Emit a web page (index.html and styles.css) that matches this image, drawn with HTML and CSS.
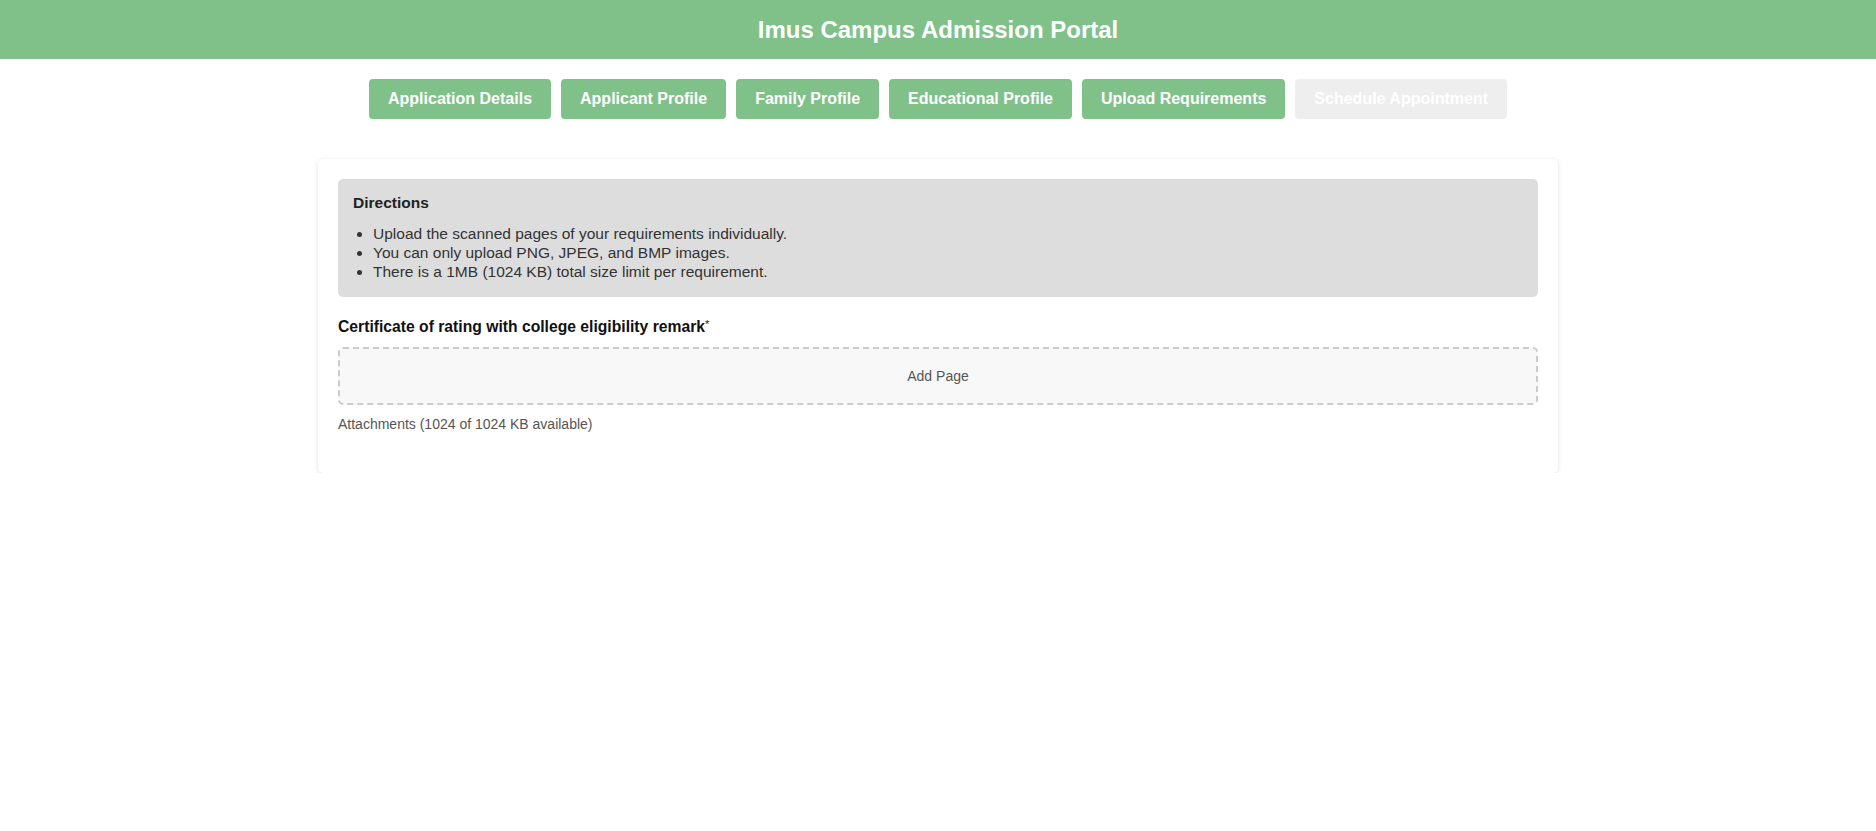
FILE: index.html
```html
<!DOCTYPE html>
<html lang="en">
<head>
<meta charset="utf-8">
<title>Imus Campus Admission Portal</title>
<link rel="stylesheet" href="styles.css">
</head>
<body>
<header class="topbar">
  <h1 class="topbar-title">Imus Campus Admission Portal</h1>
</header>
<nav class="steps">
  <a class="step">Application Details</a>
  <a class="step">Applicant Profile</a>
  <a class="step">Family Profile</a>
  <a class="step">Educational Profile</a>
  <a class="step">Upload Requirements</a>
  <a class="step step-disabled">Schedule Appointment</a>
</nav>
<main class="card">
  <section class="directions">
    <h2 class="directions-title">Directions</h2>
    <ul class="directions-list">
      <li>Upload the scanned pages of your requirements individually.</li>
      <li>You can only upload PNG, JPEG, and BMP images.</li>
      <li>There is a 1MB (1024 KB) total size limit per requirement.</li>
    </ul>
  </section>
  <section class="requirement">
    <div class="req-label">Certificate of rating with college eligibility remark<span class="req-star">*</span></div>
    <div class="dropzone">Add Page</div>
    <div class="req-note">Attachments (1024 of 1024 KB available)</div>
  </section>
</main>
</body>
</html>
```
FILE: styles.css
```css
* { box-sizing: border-box; }
html, body { margin: 0; padding: 0; }
body {
  font-family: "Liberation Sans", Arial, sans-serif;
  background: #ffffff;
  color: #222;
}
.topbar {
  height: 59px;
  background: #80c18a;
  display: flex;
  align-items: center;
  justify-content: center;
}
.topbar-title {
  margin: 0;
  font-size: 24px;
  font-weight: bold;
  color: #ffffff;
  line-height: 27px;
  padding-bottom: 1px;
}
.steps {
  display: flex;
  justify-content: center;
  gap: 10px;
  margin-top: 20px;
}
.step {
  display: flex;
  align-items: center;
  height: 40px;
  padding: 0 19px;
  background: #80c18a;
  color: #ffffff;
  font-size: 16px;
  font-weight: bold;
  border-radius: 4px;
  white-space: nowrap;
}
.step-disabled {
  background: #eeeeee;
  color: #ffffff;
}
.card {
  width: 1240px;
  margin: 40px auto 0;
  padding: 20px 20px 1px;
  background: #ffffff;
  border-radius: 5px;
  box-shadow: 0 1px 5px rgba(0, 0, 0, 0.12);
}
.directions {
  background: #dddddd;
  border-radius: 5px;
  padding: 15px;
}
.directions-title {
  margin: 0;
  font-size: 15.5px;
  font-weight: bold;
  line-height: 17px;
  color: #222;
}
.directions-list {
  margin: 13px 0 0;
  padding-left: 20px;
  font-size: 15.5px;
  line-height: 19.2px;
  color: #333;
}
.requirement {
  margin: 18px 0 40px;
}
.req-label {
  font-size: 15.7px;
  font-weight: bold;
  line-height: 18px;
  color: #111;
}
.req-star {
  font-weight: normal;
  font-size: 11px;
  vertical-align: 4px;
}
.dropzone {
  margin-top: 11px;
  height: 58px;
  display: flex;
  align-items: center;
  justify-content: center;
  background: #f8f8f8;
  border: 2px dashed #cccccc;
  border-radius: 5px;
  font-size: 14px;
  color: #555;
}
.req-note {
  margin-top: 11px;
  font-size: 14px;
  line-height: 16px;
  color: #555;
}
```
